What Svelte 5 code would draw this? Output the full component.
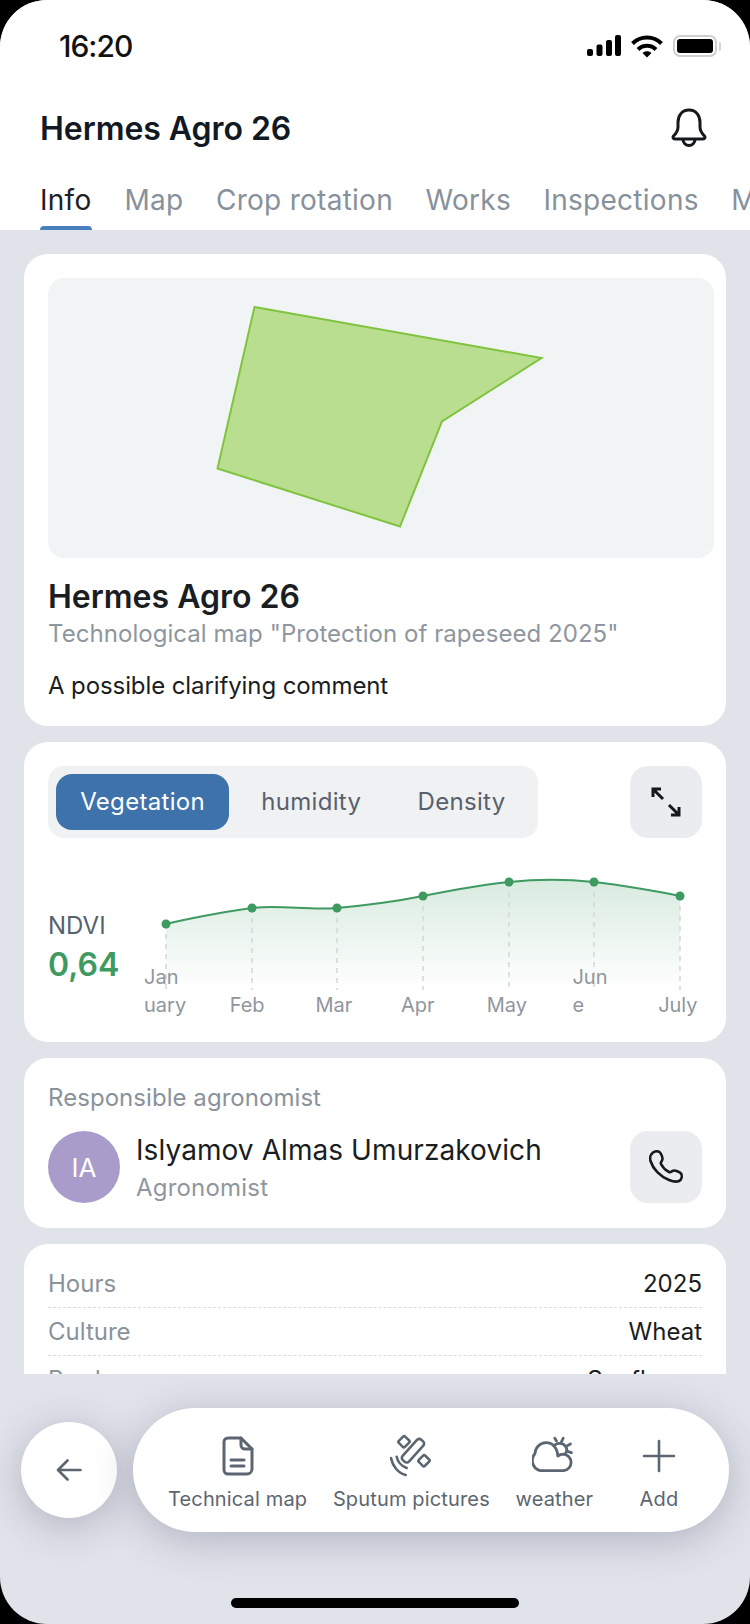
<script>
  const tabs = ['Info', 'Map', 'Crop rotation', 'Works', 'Inspections', 'Monitoring'];
  const modes = ['Vegetation', 'humidity', 'Density'];
  const months = ['Jan\nuary', 'Feb', 'Mar', 'Apr', 'May', 'Jun\ne', 'July'];
  const facts = [
    ['Hours', '2025'],
    ['Culture', 'Wheat'],
    ['Predecessor', 'Sunflower']
  ];

  // chart points, in the coordinates of the svg
  const pts = [[22, 54], [108, 38], [193, 38], [279, 26], [365, 12], [450, 12], [536, 26]];
  const floor = 120;

  function smooth(p) {
    let d = `M${p[0][0]} ${p[0][1]}`;
    for (let i = 0; i < p.length - 1; i++) {
      const a = p[Math.max(i - 1, 0)];
      const b = p[i];
      const c = p[i + 1];
      const e = p[Math.min(i + 2, p.length - 1)];
      const x1 = b[0] + (c[0] - a[0]) / 6;
      const y1 = b[1] + (c[1] - a[1]) / 4.5;
      const x2 = c[0] - (e[0] - b[0]) / 6;
      const y2 = c[1] - (e[1] - b[1]) / 4.5;
      d += ` C${x1} ${y1} ${x2} ${y2} ${c[0]} ${c[1]}`;
    }
    return d;
  }

  const line = smooth(pts);
  const area = `${line} L536 ${floor} L22 ${floor} Z`;
</script>

<div class="phone">
  <div class="status">
    <span class="time">16:20</span>
    <div class="status-icons">
      <svg width="34" height="22" viewBox="0 0 34 22" fill="#000">
        <rect x="0" y="14" width="6" height="7" rx="2" />
        <rect x="9.5" y="9.5" width="6" height="11.5" rx="2" />
        <rect x="19" y="5" width="6" height="16" rx="2" />
        <rect x="28" y="0" width="6" height="21" rx="2" />
      </svg>
      <svg width="32" height="23" viewBox="0 0 32 23" fill="none" stroke="#000" stroke-width="4">
        <path d="M1.5 8.5C9.5 0.5 22.5 0.5 30.500 8.500" />
        <path d="M7 14.500C12 9.500 20 9.500 25 14.500" />
        <path d="M11.500 18L16 22.500L20.500 18C18 15.500 14 15.500 11.500 18Z" fill="#000" stroke="none" />
      </svg>
      <div class="battery"><div class="battery-fill"></div></div>
      <div class="battery-nub"></div>
    </div>
  </div>

  <div class="head">
    <h1>Hermes Agro 26</h1>
    <svg class="bell" width="38" height="40" viewBox="0 0 38 40" fill="none" stroke="#15181d" stroke-width="3" stroke-linejoin="round" stroke-linecap="round">
      <path d="M19 2C11.500 2 8 8 8 14.500V19C8 23 6 25.500 3.500 28C2.500 29.200 3 31 5 31H33C35 31 35.500 29.200 34.500 28C32 25.500 30 23 30 19V14.500C30 8 26.500 2 19 2Z" />
      <path d="M13 31.500A6 6 0 0 0 25 31.500" />
    </svg>
  </div>

  <div class="tabs">
    {#each tabs as tab, i}
      <div class="tab" class:active={i === 0}>
        {tab}
        {#if i === 0}<span class="marker"></span>{/if}
      </div>
    {/each}
  </div>

  <div class="scroll">
    <div class="card field">
      <div class="map">
        <svg width="666" height="280" viewBox="0 0 666 280">
          <polygon points="206.500,29 493.500,80 394,143.500 352,248.500 169.500,190.500" fill="#b9de90" stroke="#80c33f" stroke-width="2" />
        </svg>
      </div>
      <h2>Hermes Agro 26</h2>
      <p class="sub">Technological map "Protection of rapeseed 2025"</p>
      <p class="comment">A possible clarifying comment</p>
    </div>

    <div class="card stats">
      <div class="toolbar">
        <div class="segments">
          {#each modes as mode, i}
            <div class="segment" class:on={i === 0}>{mode}</div>
          {/each}
        </div>
        <div class="square">
          <svg width="32" height="32" viewBox="0 0 32 32" fill="none" stroke="#15181d" stroke-width="3">
            <path d="M3 3L13 13M3 11V3H11" />
            <path d="M19 19L29 29M29 21V29H21" />
          </svg>
        </div>
      </div>

      <div class="chart-row">
        <div class="ndvi">
          <div class="ndvi-name">NDVI</div>
          <div class="ndvi-value">0,64</div>
        </div>
        <div class="chart">
          <svg width="558" height="149" viewBox="0 0 558 149">
            <defs>
              <linearGradient id="fade" x1="0" y1="0" x2="0" y2="1">
                <stop offset="0" stop-color="#3f9a62" stop-opacity="0.2" />
                <stop offset="1" stop-color="#3f9a62" stop-opacity="0" />
              </linearGradient>
            </defs>
            <path d={area} fill="url(#fade)" />
            {#each pts as p}
              <line x1={p[0]} y1={p[1]} x2={p[0]} y2={floor} stroke="#d3d6da" stroke-width="1.500" stroke-dasharray="5 5" />
            {/each}
            <path d={line} fill="none" stroke="#3f9a62" stroke-width="2" />
            {#each pts as p}
              <circle cx={p[0]} cy={p[1]} r="4.500" fill="#3f9a62" />
            {/each}
          </svg>
          <div class="months">
            {#each months as m}
              <span class="month">{m}</span>
            {/each}
          </div>
        </div>
      </div>
    </div>

    <div class="card person">
      <div class="person-label">Responsible agronomist</div>
      <div class="person-row">
        <div class="avatar">IA</div>
        <div class="person-text">
          <div class="person-name">Islyamov Almas Umurzakovich</div>
          <div class="person-role">Agronomist</div>
        </div>
        <div class="square">
          <svg width="34" height="34" viewBox="0 0 34 34" fill="none" stroke="#15181d" stroke-width="2.600" stroke-linejoin="round">
            <path d="M4 2.500C6 1 9 1 10.500 2C12 3 13.500 7 13.500 9C13.500 11 11 12 12 14C13.500 17 17 20.500 20 22C22 23 23 20.500 25 20.500C27 20.500 31 22 32 23.500C33 25 33 28 31.500 30C29.500 32 25 32 20 30C11 26.500 4 19 1.500 11C.5 7.500 2 4 4 2.500Z" />
          </svg>
        </div>
      </div>
    </div>

    <div class="card facts">
      {#each facts as f}
        <div class="fact">
          <span class="fact-key">{f[0]}</span>
          <span class="fact-val">{f[1]}</span>
        </div>
      {/each}
    </div>
  </div>

  <div class="bottom">
    <div class="back">
      <svg width="26" height="22" viewBox="0 0 26 22" fill="none" stroke="#5b6670" stroke-width="2.600" stroke-linecap="round" stroke-linejoin="round">
        <path d="M24.500 11H2M11.500 1.500L2 11L11.500 20.500" />
      </svg>
    </div>
    <div class="pill">
      <div class="action">
        <svg width="32" height="40" viewBox="0 0 32 40" fill="none" stroke="#5b6670" stroke-width="3" stroke-linejoin="round" stroke-linecap="round">
          <path d="M6 2H19L30 13V33A5 5 0 0 1 25 38H6A4 4 0 0 1 2 34V6A4 4 0 0 1 6 2Z" />
          <path d="M19 2V9A4 4 0 0 0 23 13H30" />
          <path d="M9 24H22M9 30H22" />
        </svg>
        <span>Technical map</span>
      </div>
      <div class="action">
        <svg width="42" height="42" viewBox="1 0 42 42" fill="none" stroke="#5b6670" stroke-width="2.600" stroke-linecap="round">
          <rect x="10.750" y="2.200" width="8.500" height="9" rx="1.500" transform="rotate(45 15 6.700)" />
          <rect x="30.750" y="21.200" width="8.500" height="9" rx="1.500" transform="rotate(45 35 25.700)" />
          <rect x="19.750" y="2" width="8.500" height="27.500" rx="3" transform="rotate(42 24 15.700)" />
          <path d="M2 23C3.500 31 9 38 16.700 40" />
          <path d="M7.700 21.700C8.500 26 12 31 17.700 33" />
        </svg>
        <span>Sputum pictures</span>
      </div>
      <div class="action">
        <svg width="44" height="38" viewBox="3 0 44 38" fill="none" stroke="#5b6670" stroke-width="2.800" stroke-linecap="round" stroke-linejoin="round">
          <path d="M11.500 33.700H34.800A8.300 8.300 0 0 0 34.500 17.200C32.500 17.200 30.500 17.800 28.800 19C28.500 11 23.500 5.700 17.200 5.700C11 5.700 6.500 10.500 6 16.500A10.500 10.500 0 0 0 11.500 33.700Z" />
          <path d="M25.800 8C28.500 5.800 34 5.500 36.600 9.500C38.300 12 38 14.500 36.500 16.300" />
          <path d="M25.800 1.300L27.500 4M34.200 1.300L32.500 4.700M41.500 7L38.200 8.700M42.500 15.700L39.200 14.700" />
        </svg>
        <span>weather</span>
      </div>
      <div class="action wide">
        <svg width="34" height="34" viewBox="0 0 34 34" fill="none" stroke="#5b6670" stroke-width="2.600" stroke-linecap="round">
          <path d="M17 2V32M2 17H32" />
        </svg>
        <span>Add</span>
      </div>
    </div>
  </div>

  <div class="home-bar"></div>
</div>

<style>
  :global(body) {
    background: #000;
  }

  .phone {
    width: 750px;
    height: 1624px;
    display: flex;
    flex-direction: column;
    background: #e1e3eb;
    border-radius: 47px;
    overflow: hidden;
    font-family: Inter, "Liberation Sans", sans-serif;
    color: #1a1d21;
  }

  /* status bar */
  .status {
    height: 92px;
    flex: none;
    background: #fff;
    display: flex;
    align-items: center;
    justify-content: space-between;
    padding: 0 29px 0 59px;
    box-sizing: border-box;
  }

  .time {
    font-size: 30px;
    font-weight: 500;
    letter-spacing: -1px;
    color: #111;
  }

  .status-icons {
    display: flex;
    align-items: center;
  }

  .status-icons svg:first-child {
    margin-right: 10px;
  }

  .battery {
    width: 44px;
    height: 22px;
    margin-left: 10px;
    box-sizing: border-box;
    border: 2px solid #cfcfcf;
    border-radius: 7px;
    padding: 2px;
  }

  .battery-fill {
    height: 100%;
    background: #000;
    border-radius: 3px;
  }

  .battery-nub {
    width: 2px;
    height: 9px;
    margin-left: 2px;
    background: #d4d4d4;
    border-radius: 0 2px 2px 0;
  }

  /* header */
  .head {
    height: 72px;
    flex: none;
    background: #fff;
    display: flex;
    align-items: center;
    justify-content: space-between;
    padding: 1px 42px 0 40px;
    box-sizing: border-box;
  }

  .bell {
    margin-top: -2px;
  }

  h1 {
    margin: 0;
    font-size: 32px;
    line-height: 40px;
    font-weight: 600;
    letter-spacing: -0.05px;
    color: #111a24;
  }

  .tabs {
    height: 66px;
    flex: none;
    background: #fff;
    display: flex;
    gap: 32.500px;
    padding: 18px 0 0 40px;
    box-sizing: border-box;
    overflow: hidden;
  }

  .tab {
    flex: none;
    font-size: 28px;
    line-height: 36px;
    letter-spacing: 0.27px;
    color: #87919b;
  }

  .tab.active {
    color: #1a2027;
  }

  .marker {
    display: block;
    width: 52px;
    height: 4px;
    margin-top: 8px;
    background: #4a7fbd;
    border-radius: 4px 4px 0 0;
  }

  /* scrolling part */
  .scroll {
    height: 1144px;
    flex: none;
    box-sizing: border-box;
    padding: 24px 24px 0;
    display: flex;
    flex-direction: column;
    gap: 16px;
    overflow: hidden;
  }

  .card {
    flex: none;
    background: #fff;
    border-radius: 24px;
    padding: 24px;
    box-sizing: border-box;
  }

  .field {
    height: 472px;
    padding-right: 12px;
  }

  .map {
    height: 280px;
    background: #f1f4f5;
    border-radius: 16px;
  }

  .map svg {
    display: block;
  }

  h2 {
    margin: 19px 0 0;
    font-size: 32px;
    line-height: 40px;
    font-weight: 600;
    color: #1a1d21;
  }

  .sub {
    margin: 1px 0 0;
    font-size: 24px;
    line-height: 32px;
    letter-spacing: 0.05px;
    color: #8f969e;
  }

  .comment {
    margin: 20px 0 0;
    font-size: 24px;
    line-height: 32px;
    letter-spacing: -0.1px;
    color: #1a1d21;
  }

  .stats {
    height: 300px;
  }

  .toolbar {
    display: flex;
    justify-content: space-between;
  }

  .segments {
    display: flex;
    gap: 8px;
    padding: 8px;
    height: 72px;
    box-sizing: border-box;
    background: #f0f1f3;
    border-radius: 16px;
  }

  .segment {
    padding: 0 24.200px 1px;
    display: flex;
    align-items: center;
    font-size: 24px;
    font-weight: 400;
    letter-spacing: 0.3px;
    color: #58616c;
    border-radius: 16px;
  }

  .segment.on {
    background: #3d72ab;
    color: #fff;
  }

  .square {
    width: 72px;
    height: 72px;
    flex: none;
    background: #ebecef;
    border-radius: 18px;
    display: flex;
    align-items: center;
    justify-content: center;
  }

  .chart-row {
    display: flex;
    margin-top: 32px;
  }

  .ndvi {
    width: 96px;
    flex: none;
    padding-top: 40px;
  }

  .ndvi-name {
    font-size: 24px;
    line-height: 32px;
    color: #58616c;
  }

  .ndvi-value {
    margin-top: 2px;
    font-size: 32px;
    line-height: 42px;
    font-weight: 600;
    color: #3f9a62;
  }

  .chart {
    display: grid;
    width: 558px;
    height: 149px;
  }

  .chart svg,
  .months {
    grid-area: 1 / 1;
  }

  .months {
    display: flex;
    gap: 45.700px;
    align-items: flex-end;
  }

  .month {
    width: 40px;
    flex: none;
    font-size: 20px;
    line-height: 28px;
    color: #8f969e;
    white-space: pre;
  }

  .person {
    height: 170px;
  }

  .person-label {
    margin-top: 1px;
    font-size: 24px;
    line-height: 30px;
    letter-spacing: 0.05px;
    color: #8a929b;
  }

  .person-row {
    display: flex;
    align-items: center;
    margin-top: 18px;
  }

  .avatar {
    width: 72px;
    height: 72px;
    flex: none;
    border-radius: 50%;
    background: #a99cca;
    color: #fff;
    font-size: 26px;
    display: flex;
    align-items: center;
    justify-content: center;
  }

  .person-text {
    flex: 1;
    margin-left: 16px;
  }

  .person-name {
    font-size: 28px;
    line-height: 38px;
    font-weight: 400;
    letter-spacing: 0.08px;
    color: #1a1d21;
  }

  .person-role {
    margin-top: 4px;
    font-size: 24px;
    line-height: 30px;
    letter-spacing: 0.2px;
    color: #8f969e;
  }

  .facts {
    padding-top: 16px;
  }

  .fact {
    height: 48px;
    box-sizing: border-box;
    padding-bottom: 1px;
    display: flex;
    align-items: center;
    justify-content: space-between;
    font-size: 24px;
    border-bottom: 1px dashed #d9dcdf;
  }

  .fact-key {
    color: #8a929b;
  }

  .fact-val {
    color: #1a1d21;
  }

  /* bottom actions */
  .bottom {
    flex: none;
    display: flex;
    align-items: center;
    gap: 16px;
    padding: 34px 0 0 21px;
  }

  .back {
    width: 96px;
    height: 96px;
    flex: none;
    border-radius: 50%;
    background: #fff;
    display: flex;
    align-items: center;
    justify-content: center;
    box-shadow: 0 8px 40px rgba(50, 55, 80, 0.28);
  }

  .pill {
    width: 596px;
    height: 124px;
    flex: none;
    box-sizing: border-box;
    border-radius: 62px;
    background: #fff;
    display: flex;
    align-items: center;
    padding: 7px 0 0 35px;
    gap: 25.700px;
    box-shadow: 0 8px 40px rgba(50, 55, 80, 0.28);
  }

  .action {
    flex: none;
    display: flex;
    flex-direction: column;
    align-items: center;
    font-size: 20px;
    line-height: 28px;
    font-weight: 400;
    letter-spacing: 0.15px;
    color: #5b6670;
  }

  .action svg {
    height: 44px;
    margin-bottom: 7px;
  }

  .action.wide {
    width: 74px;
    margin-left: 3px;
  }

  .home-bar {
    width: 288px;
    height: 10px;
    flex: none;
    margin: 66px auto 0;
    background: #000;
    border-radius: 5px;
  }
</style>
